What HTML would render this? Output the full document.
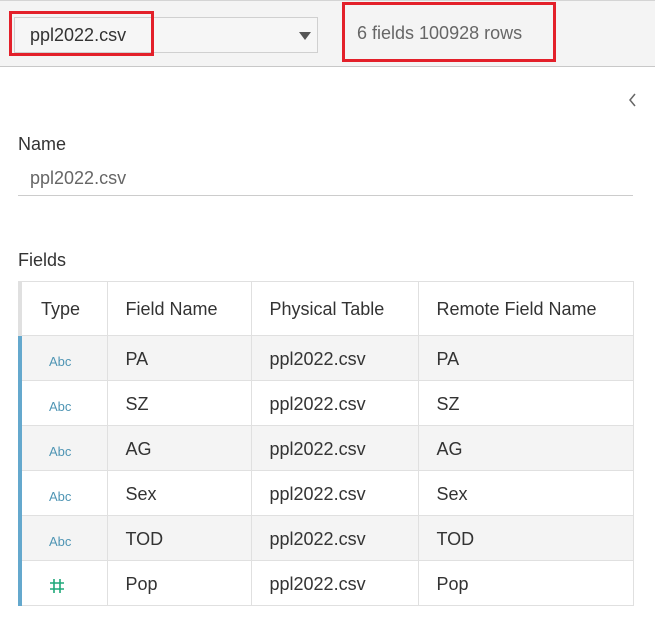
<!DOCTYPE html>
<html><head><style>
*{margin:0;padding:0;box-sizing:border-box}
body{width:655px;height:626px;background:#fff;font-family:"Liberation Sans",sans-serif;color:#333;position:relative;overflow:hidden}
.top{position:absolute;left:0;top:0;width:655px;height:67px;background:#f4f4f4;border-top:1px solid #d4d4d4;border-bottom:1px solid #c8c8c8}
.dd{position:absolute;left:14px;top:16px;width:304px;height:36px;border:1px solid #d0d0d0;background:#f6f6f6}
.dd span{position:absolute;left:15px;top:7px;font-size:18px;color:#333}
.arr{position:absolute;left:284px;top:14px;width:0;height:0;border-left:6px solid transparent;border-right:6px solid transparent;border-top:8px solid #555}
.red{position:absolute;border:3px solid #e3202a}
.info{position:absolute;left:357px;top:22px;font-size:18px;color:#666}
.abs{position:absolute}
table{position:absolute;left:18px;top:281px;border-collapse:collapse;font-size:18px;table-layout:fixed;width:613px}
td{border:1px solid #e0e0e0;height:45px;padding-left:18px;color:#333;padding-top:2px}
tr.h td{height:54px}
tr.g td{background:#f4f4f4}
td.t{padding-left:27px;font-size:13px;color:#4f95b4;border-left:4px solid #64a8cd;padding-top:6px}
tr.h td.t{border-left:4px solid #e0e0e0;padding-left:19px;font-size:18px;color:#333;padding-top:2px}
</style></head><body>
<div class="top">
<div class="dd"><span>ppl2022.csv</span><div class="arr"></div></div>
<div class="info">6 fields 100928 rows</div>
</div>
<div class="red" style="left:9px;top:11px;width:145px;height:45px"></div>
<div class="red" style="left:342px;top:2px;width:214px;height:60px"></div>
<svg class="abs" style="left:627px;top:92px" width="12" height="16"><path d="M8 2 L3 8 L8 14" fill="none" stroke="#666" stroke-width="1.5"/></svg>
<div class="abs" style="left:18px;top:134px;font-size:18px;color:#333">Name</div>
<div class="abs" style="left:30px;top:168px;font-size:18px;color:#666">ppl2022.csv</div>
<div class="abs" style="left:18px;top:195px;width:615px;height:1px;background:#ccc"></div>
<div class="abs" style="left:18px;top:250px;font-size:18px;color:#333">Fields</div>
<table>
<colgroup><col style="width:87px"><col style="width:144px"><col style="width:167px"><col style="width:215px"></colgroup>
<tr class="h"><td class="t">Type</td><td>Field Name</td><td>Physical Table</td><td>Remote Field Name</td></tr>
<tr class="g"><td class="t">Abc</td><td>PA</td><td>ppl2022.csv</td><td>PA</td></tr>
<tr><td class="t">Abc</td><td>SZ</td><td>ppl2022.csv</td><td>SZ</td></tr>
<tr class="g"><td class="t">Abc</td><td>AG</td><td>ppl2022.csv</td><td>AG</td></tr>
<tr><td class="t">Abc</td><td>Sex</td><td>ppl2022.csv</td><td>Sex</td></tr>
<tr class="g"><td class="t">Abc</td><td>TOD</td><td>ppl2022.csv</td><td>TOD</td></tr>
<tr><td class="t"><svg width="16" height="16" style="vertical-align:middle"><path d="M5 1V15M11 1V15M1 5H15M1 11H15" stroke="#1fa87a" stroke-width="1.6"/></svg></td><td>Pop</td><td>ppl2022.csv</td><td>Pop</td></tr>
</table>
</body></html>
